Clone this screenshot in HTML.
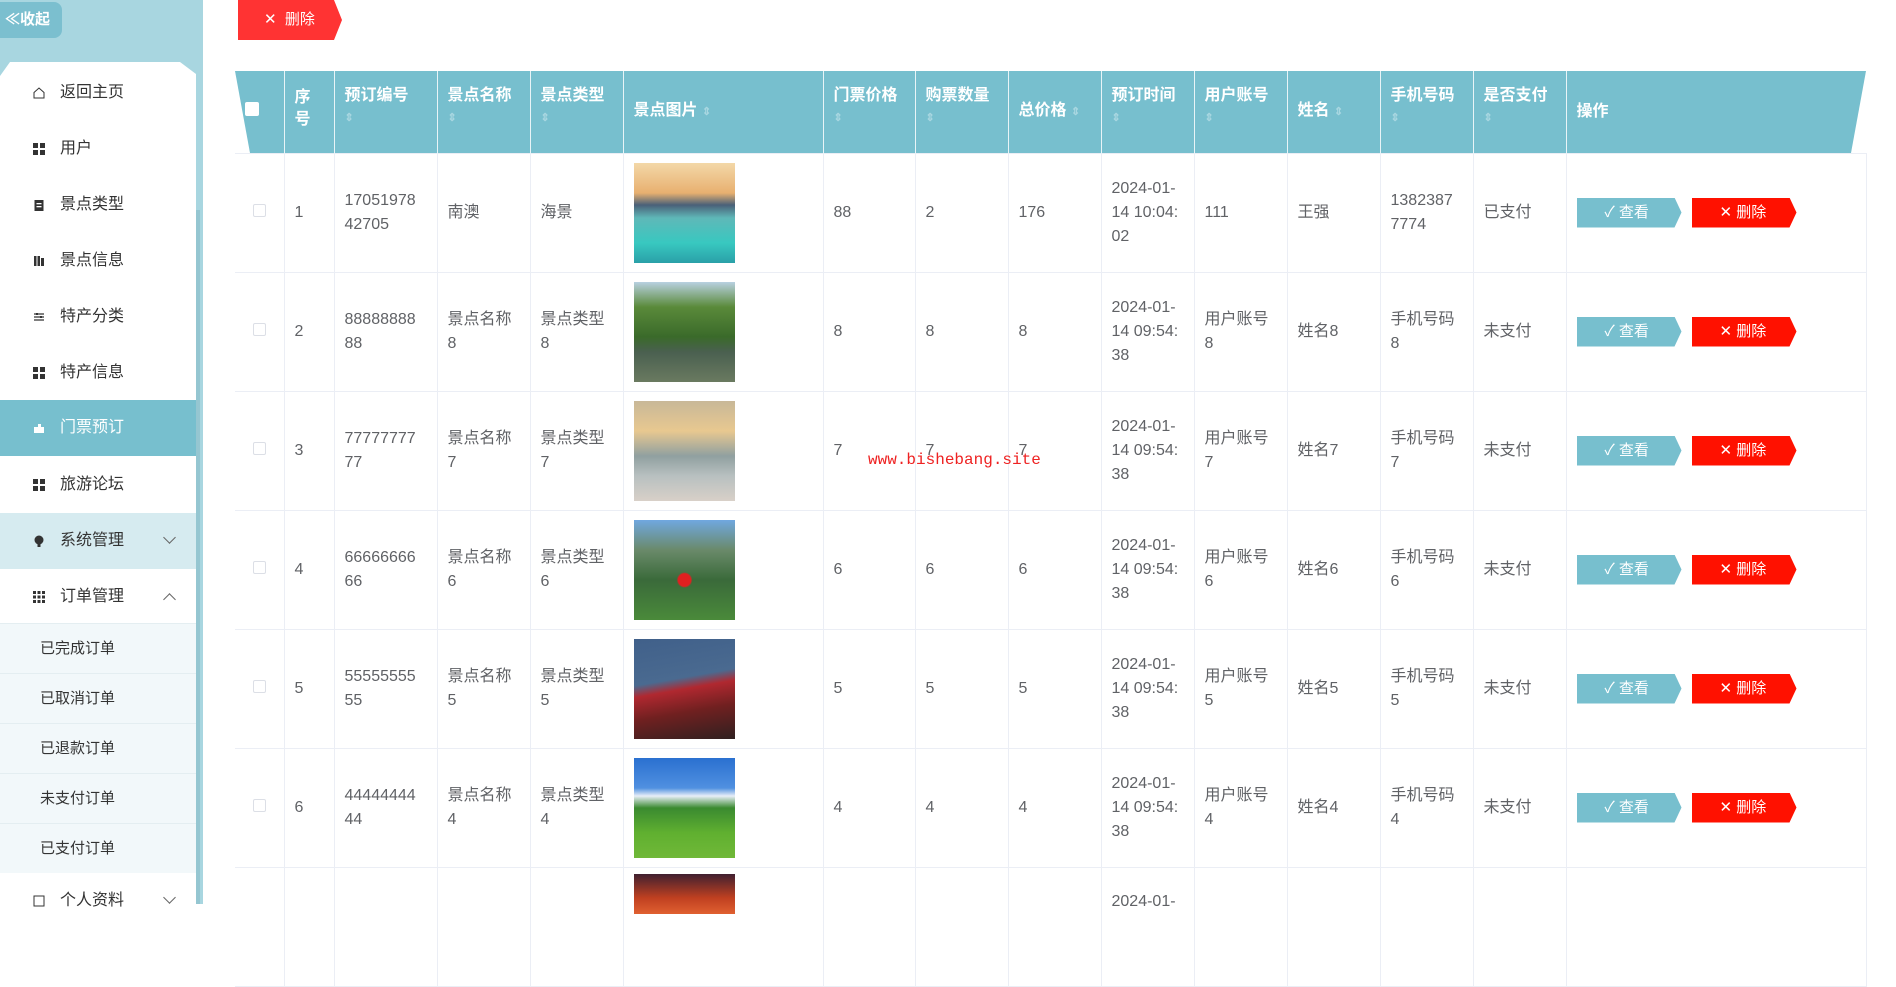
<!DOCTYPE html>
<html><head><meta charset="utf-8"><style>
*{box-sizing:border-box;margin:0;padding:0}
body{width:1896px;height:904px;overflow:hidden;background:#fff;font-family:"Liberation Sans","Noto Sans CJK SC",sans-serif;color:#606266;position:relative}
#side{position:absolute;left:0;top:0;width:203px;height:904px;background:#a8d6e0}
#collapse{position:absolute;left:0;top:2px;width:62px;height:36px;background:#7bbfcf;border-radius:0 8px 8px 0;color:#fff;font-size:15px;font-weight:bold;line-height:36px;padding-left:5px}
#panel{position:absolute;left:0;top:62px;width:196px;height:842px;background:#fff;clip-path:polygon(0 14px,10px 0,180px 0,196px 12px,196px 100%,0 100%)}
.mi{position:absolute;left:0;width:196px;height:56px;font-size:16px;color:#333;line-height:56px;padding-left:60px}
.mi .ic{position:absolute;left:33px;top:22px;width:12px;height:12px}
.g{display:grid;grid-template-columns:5px 5px;gap:2px}
.g i{background:#333;width:5px;height:5px}
.sub{position:absolute;left:0;width:196px;height:50px;background:#f2f8fa;border-top:1px solid #e4eef1;font-size:15px;color:#333;line-height:50px;padding-left:40px}
.arr{position:absolute;right:22px;top:24px;width:9px;height:9px;border-left:1.5px solid #666;border-bottom:1.5px solid #666}
#topdel{position:absolute;left:238px;top:0;width:104px;height:40px;background:#f33;clip-path:polygon(0 0,96px 0,104px 20px,96px 40px,0 40px);color:#fff;font-size:15px;line-height:40px;padding-left:26px}
#hbg{position:absolute;left:235px;top:71px;width:1631px;height:82px;background:#77bfce;clip-path:polygon(0 0,100% 0,calc(100% - 15px) 100%,15px 100%)}
table{position:absolute;left:235px;top:71px;border-collapse:collapse;table-layout:fixed;width:1631px}
th{height:82px;color:#fff;font-size:16px;font-weight:bold;text-align:left;vertical-align:top;padding:14px 10px 0;border-left:1px solid #e8f4f7;line-height:22px}
th:first-child{border-left:none}
th.m{vertical-align:middle;padding-top:0}
.s{display:block;color:#a9d7e1;font-size:11px;line-height:22px}
.si{color:#a9d7e1;font-size:11px}
td{height:119px;border:1px solid #ebeef5;font-size:16px;padding:0 10px;line-height:24px;vertical-align:middle;color:#606266}
td:first-child{border-left:none}
.cb{width:13px;height:13px;border:1px solid #dcdfe6;border-radius:2px;display:inline-block;margin-left:8px}
.img{width:101px;height:100px;display:block}
.bv,.bd{display:inline-block;width:105px;height:30px;color:#fff;font-size:15px;line-height:30px;padding-left:28px;vertical-align:middle}
.bv{background:#77bfce;clip-path:polygon(0 0,98px 0,105px 15px,98px 30px,0 30px)}
.bd{background:#f10;margin-left:10px;clip-path:polygon(0 0,98px 0,105px 15px,98px 30px,0 30px)}
#wm{position:absolute;left:868px;top:451px;color:#e22;font-family:"Liberation Mono",monospace;font-size:16px}
</style></head><body>
<div id="side">
<div id="collapse">≪收起</div>
<div id="panel"></div>
<div class="mi" style="top:65px"><svg class="ic" viewBox="0 0 12 12"><path d="M1 5.5 6 1l5 4.5V11H1z" fill="none" stroke="#333" stroke-width="1"/></svg>返回主页</div>
<div class="mi" style="top:121px"><div class="ic g"><i></i><i></i><i></i><i></i></div>用户</div>
<div class="mi" style="top:177px"><svg class="ic" viewBox="0 0 12 12"><rect x="1.5" y="1" width="9" height="11" fill="#333"/><rect x="3.5" y="4" width="5" height="1.3" fill="#fff"/><rect x="3.5" y="7" width="5" height="1.3" fill="#fff"/></svg>景点类型</div>
<div class="mi" style="top:233px"><svg class="ic" viewBox="0 0 12 12"><rect x="1" y="1" width="2.5" height="10" fill="#333"/><rect x="4.5" y="1" width="2.5" height="10" fill="#333"/><rect x="8" y="3" width="3" height="8" fill="#333"/></svg>景点信息</div>
<div class="mi" style="top:289px"><svg class="ic" viewBox="0 0 12 12"><path d="M1 3h10M1 6h10M1 9h10" stroke="#333" stroke-width="1.2"/><rect x="3" y="2" width="2" height="2" fill="#333"/><rect x="7" y="5" width="2" height="2" fill="#333"/></svg>特产分类</div>
<div class="mi" style="top:345px"><div class="ic g"><i></i><i></i><i></i><i></i></div>特产信息</div>
<div class="mi" style="top:400px;background:#77bfce;color:#fff"><svg class="ic" viewBox="0 0 12 12"><path d="M1 5h4V2h3v3h3v6H1z" fill="#fff"/></svg>门票预订</div>
<div class="mi" style="top:457px"><div class="ic g"><i></i><i></i><i></i><i></i></div>旅游论坛</div>
<div class="mi" style="top:513px;background:#d6ebf0"><svg class="ic" viewBox="0 0 12 12"><circle cx="6" cy="5" r="4.5" fill="#333"/><rect x="4.5" y="9" width="3" height="3" fill="#333"/></svg>系统管理<span class="arr" style="transform:rotate(-45deg);top:20px"></span></div>
<div class="mi" style="top:569px"><svg class="ic" viewBox="0 0 12 12"><g fill="#333"><rect x="0" y="0" width="3" height="3"/><rect x="4.5" y="0" width="3" height="3"/><rect x="9" y="0" width="3" height="3"/><rect x="0" y="4.5" width="3" height="3"/><rect x="4.5" y="4.5" width="3" height="3"/><rect x="9" y="4.5" width="3" height="3"/><rect x="0" y="9" width="3" height="3"/><rect x="4.5" y="9" width="3" height="3"/><rect x="9" y="9" width="3" height="3"/></g></svg>订单管理<span class="arr" style="transform:rotate(135deg);top:26px"></span></div>
<div class="sub" style="top:623px">已完成订单</div>
<div class="sub" style="top:673px">已取消订单</div>
<div class="sub" style="top:723px">已退款订单</div>
<div class="sub" style="top:773px">未支付订单</div>
<div class="sub" style="top:823px">已支付订单</div>
<div class="mi" style="top:873px"><svg class="ic" viewBox="0 0 12 12"><rect x="1" y="1" width="10" height="10" fill="none" stroke="#333"/></svg>个人资料<span class="arr" style="transform:rotate(-45deg);top:20px"></span></div>
<div style="position:absolute;left:196px;top:210px;width:4px;height:694px;background:#95c6d1"></div>
</div>
<div id="topdel">✕&nbsp; 删除</div>
<div id="hbg"></div>
<table>
<colgroup><col style="width:49px"><col style="width:50px"><col style="width:103px"><col style="width:93px"><col style="width:93px"><col style="width:200px"><col style="width:92px"><col style="width:93px"><col style="width:93px"><col style="width:93px"><col style="width:93px"><col style="width:93px"><col style="width:93px"><col style="width:93px"><col style="width:300px"></colgroup>
<tr>
<th class="m"><span style="display:inline-block;width:14px;height:14px;background:#fff;border-radius:2px;margin-left:0"></span></th>
<th style="padding-top:16px">序<br>号</th>
<th>预订编号<span class="s">⇕</span></th>
<th>景点名称<span class="s">⇕</span></th>
<th>景点类型<span class="s">⇕</span></th>
<th class="m">景点图片 <span class="si">⇕</span></th>
<th>门票价格<span class="s">⇕</span></th>
<th>购票数量<span class="s">⇕</span></th>
<th class="m">总价格 <span class="si">⇕</span></th>
<th>预订时间<span class="s">⇕</span></th>
<th>用户账号<span class="s">⇕</span></th>
<th class="m">姓名 <span class="si">⇕</span></th>
<th>手机号码<span class="s">⇕</span></th>
<th>是否支付<span class="s">⇕</span></th>
<th class="m">操作</th>
</tr>
<tr><td><span class="cb"></span></td><td>1</td><td>17051978<br>42705</td><td>南澳</td><td>海景</td><td><div class="img" style="background:linear-gradient(180deg,#f3d8a8 0%,#e8b070 30%,#4a6078 42%,#5fb8b8 55%,#38c8c0 80%,#2aa0a8 100%)"></div></td><td>88</td><td>2</td><td>176</td><td>2024-01-<br>14 10:04:<br>02</td><td>111</td><td>王强</td><td>1382387<br>7774</td><td>已支付</td><td><span class="bv">✓ 查看</span><span class="bd">✕ 删除</span></td></tr>
<tr><td><span class="cb"></span></td><td>2</td><td>88888888<br>88</td><td>景点名称<br>8</td><td>景点类型<br>8</td><td><div class="img" style="background:linear-gradient(180deg,#b8d0e0 0%,#5a8a3a 25%,#3a6a2a 55%,#4a6050 70%,#6a7a60 100%)"></div></td><td>8</td><td>8</td><td>8</td><td>2024-01-<br>14 09:54:<br>38</td><td>用户账号<br>8</td><td>姓名8</td><td>手机号码<br>8</td><td>未支付</td><td><span class="bv">✓ 查看</span><span class="bd">✕ 删除</span></td></tr>
<tr><td><span class="cb"></span></td><td>3</td><td>77777777<br>77</td><td>景点名称<br>7</td><td>景点类型<br>7</td><td><div class="img" style="background:linear-gradient(180deg,#c8b898 0%,#e8c890 30%,#90a0a0 55%,#b8c0c0 75%,#d8d0c8 100%)"></div></td><td>7</td><td>7</td><td>7</td><td>2024-01-<br>14 09:54:<br>38</td><td>用户账号<br>7</td><td>姓名7</td><td>手机号码<br>7</td><td>未支付</td><td><span class="bv">✓ 查看</span><span class="bd">✕ 删除</span></td></tr>
<tr><td><span class="cb"></span></td><td>4</td><td>66666666<br>66</td><td>景点名称<br>6</td><td>景点类型<br>6</td><td><div class="img" style="background:radial-gradient(circle at 50% 60%,#e02020 0 8%,transparent 10%),linear-gradient(180deg,#70a8e0 0%,#6a8a6a 30%,#3a6a3a 60%,#4a8a3a 100%)"></div></td><td>6</td><td>6</td><td>6</td><td>2024-01-<br>14 09:54:<br>38</td><td>用户账号<br>6</td><td>姓名6</td><td>手机号码<br>6</td><td>未支付</td><td><span class="bv">✓ 查看</span><span class="bd">✕ 删除</span></td></tr>
<tr><td><span class="cb"></span></td><td>5</td><td>55555555<br>55</td><td>景点名称<br>5</td><td>景点类型<br>5</td><td><div class="img" style="background:linear-gradient(170deg,#40608a 0%,#4a6a90 40%,#b02830 50%,#702020 70%,#302020 100%)"></div></td><td>5</td><td>5</td><td>5</td><td>2024-01-<br>14 09:54:<br>38</td><td>用户账号<br>5</td><td>姓名5</td><td>手机号码<br>5</td><td>未支付</td><td><span class="bv">✓ 查看</span><span class="bd">✕ 删除</span></td></tr>
<tr><td><span class="cb"></span></td><td>6</td><td>44444444<br>44</td><td>景点名称<br>4</td><td>景点类型<br>4</td><td><div class="img" style="background:linear-gradient(180deg,#2a70d0 0%,#5090e0 30%,#e8eef8 38%,#3a8a30 50%,#60b030 75%,#70b838 100%)"></div></td><td>4</td><td>4</td><td>4</td><td>2024-01-<br>14 09:54:<br>38</td><td>用户账号<br>4</td><td>姓名4</td><td>手机号码<br>4</td><td>未支付</td><td><span class="bv">✓ 查看</span><span class="bd">✕ 删除</span></td></tr>
<tr><td></td><td></td><td></td><td></td><td></td><td style="vertical-align:top;padding-top:6px"><div class="img" style="height:40px;background:linear-gradient(180deg,#402030,#c04020 60%,#e06030)"></div></td><td></td><td></td><td></td><td style="vertical-align:top;padding-top:22px">2024-01-</td><td></td><td></td><td></td><td></td><td></td></tr>
</table>
<div id="wm">www.bishebang.site</div>
</body></html>
